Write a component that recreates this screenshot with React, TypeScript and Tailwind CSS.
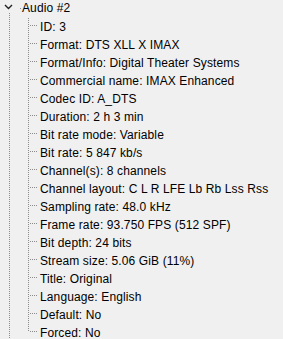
import React from "react";

const items = [
  "ID: 3",
  "Format: DTS XLL X IMAX",
  "Format/Info: Digital Theater Systems",
  "Commercial name: IMAX Enhanced",
  "Codec ID: A_DTS",
  "Duration: 2 h 3 min",
  "Bit rate mode: Variable",
  "Bit rate: 5 847 kb/s",
  "Channel(s): 8 channels",
  "Channel layout: C L R LFE Lb Rb Lss Rss",
  "Sampling rate: 48.0 kHz",
  "Frame rate: 93.750 FPS (512 SPF)",
  "Bit depth: 24 bits",
  "Stream size: 5.06 GiB (11%)",
  "Title: Original",
  "Language: English",
  "Default: No",
  "Forced: No",
];

const DOT = "#8c8c8c";

function HeaderGlyph() {
  return (
    <svg width="22" height="18" viewBox="0 0 22 18" className="shrink-0">
      <path d="M5 5 L8.5 8.5 L12 5" fill="none" stroke="#222" strokeWidth="1.4" />
      <line x1="9.5" y1="13" x2="9.5" y2="18" stroke={DOT} strokeDasharray="1 1" />
      <rect x="20" y="8" width="1" height="1" fill={DOT} />
    </svg>
  );
}

function RowGlyph({ last }: { last: boolean }) {
  return (
    <svg width="40" height="18" viewBox="0 0 40 18" className="shrink-0">
      <line x1="9.5" y1="1" x2="9.5" y2="18" stroke={DOT} strokeDasharray="1 1" />
      <line x1="28.5" y1="0" x2="28.5" y2={last ? 8 : 18} stroke={DOT} strokeDasharray="1 1" />
      <line x1="30" y1="7.5" x2="38" y2="7.5" stroke={DOT} strokeDasharray="1 1" />
    </svg>
  );
}

export default function App() {
  return (
    <div
      className="w-[283px] h-[339px] bg-[#f0f0f0] overflow-hidden text-[12px] text-[#000] tracking-[0.12px]"
      style={{ fontFamily: '"Liberation Sans", Arial, sans-serif' }}
    >
      <div className="flex h-[18px] items-center">
        <HeaderGlyph />
        <span className="leading-[18px] -mt-[2px]">Audio #2</span>
      </div>
      {items.map((t, i) => (
        <div key={t} className="flex h-[18px] items-center">
          <RowGlyph last={i === items.length - 1} />
          <span className="leading-[18px] whitespace-nowrap">{t}</span>
        </div>
      ))}
      <div className="flex h-[18px]">
        <svg width="40" height="18" viewBox="0 0 40 18">
          <line x1="9.5" y1="1" x2="9.5" y2="18" stroke={DOT} strokeDasharray="1 1" />
        </svg>
      </div>
    </div>
  );
}
